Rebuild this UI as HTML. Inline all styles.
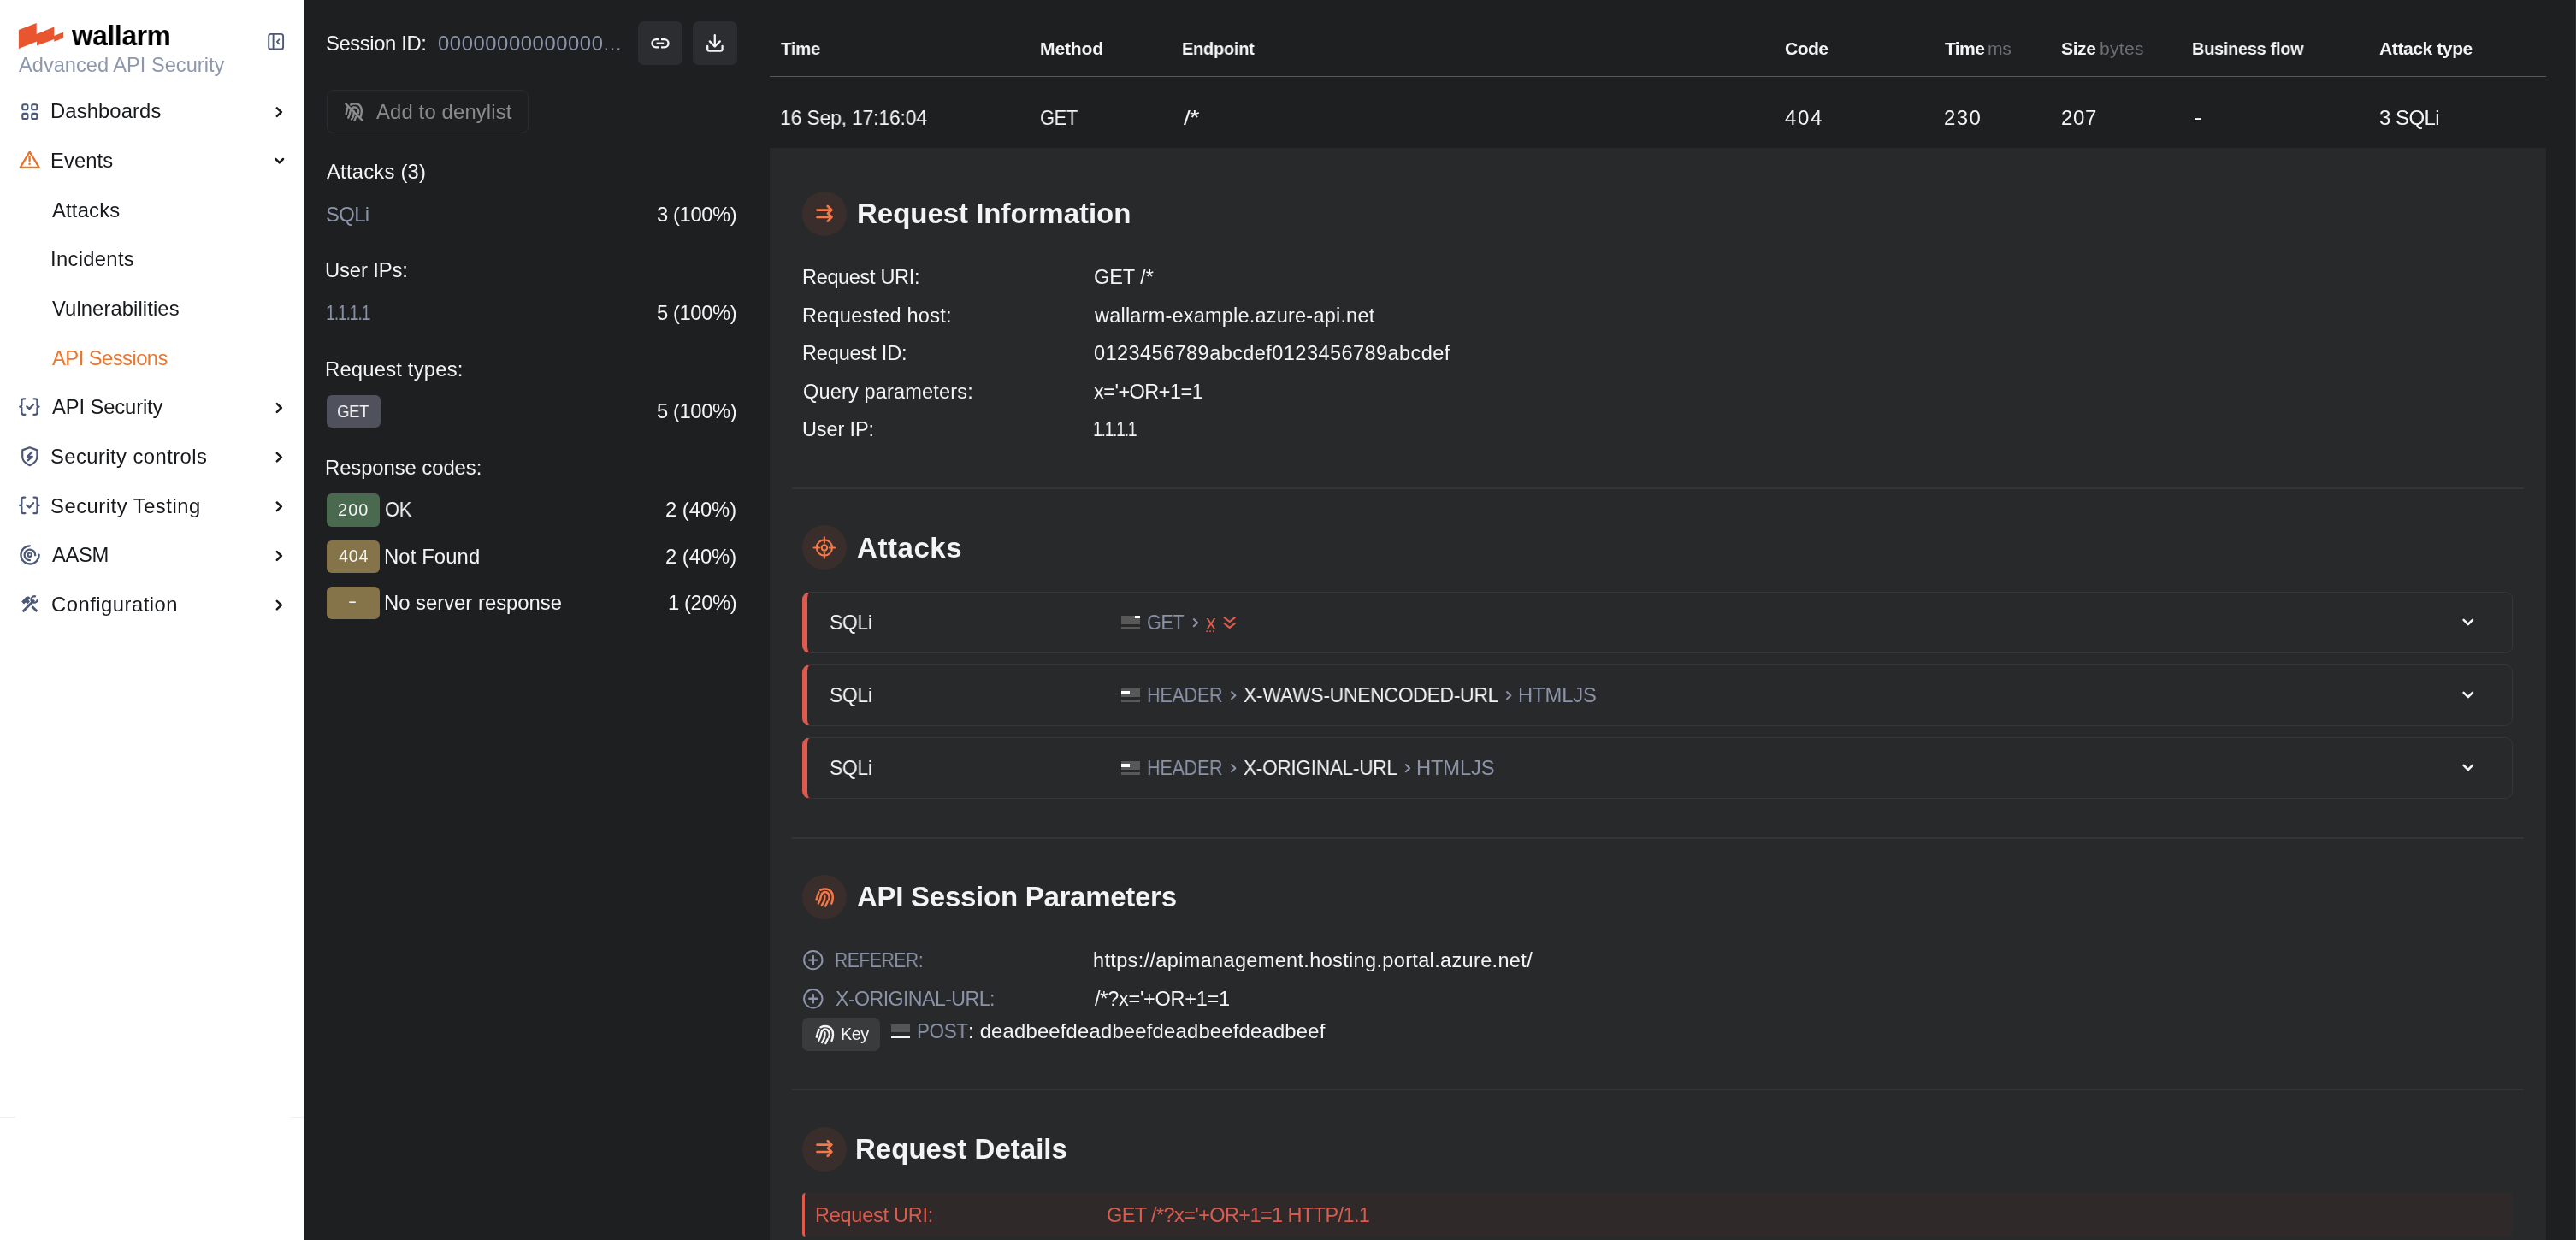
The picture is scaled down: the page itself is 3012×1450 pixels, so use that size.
<!DOCTYPE html>
<html><head><meta charset="utf-8"><style>
html,body{margin:0;padding:0}
body{width:3012px;height:1450px;position:relative;overflow:hidden;background:#1e1f21;font-family:"Liberation Sans",sans-serif}
.a{position:absolute;box-sizing:border-box}
.t{position:absolute;white-space:nowrap;will-change:transform}
</style></head><body>
<div class="a" style="left:0;top:0;width:356px;height:1450px;background:#ffffff"></div><div class="a" style="left:0;top:1305.5px;width:18px;height:1px;background:#f1f1f2"></div><div class="a" style="left:339px;top:1305.5px;width:17px;height:1px;background:#f1f1f2"></div><div class="a" style="left:900px;top:173px;width:2077px;height:1277px;background:#28292b"></div><div class="a" style="left:900px;top:89px;width:2077px;height:1.3px;background:#58595c"></div><div class="a" style="left:3011px;top:0;width:1px;height:1450px;background:#313234"></div><svg class="a" style="left:0;top:0" width="80" height="60" viewBox="0 0 80 60"><path fill="#e8552f" d="M21.9 35.1 L42.7 27 L42.7 40 L63.3 31.5 L63.3 42 L74.2 37.5 L74.2 44.4 L63.3 48.8 L63.3 46 L43.1 53.6 L43.1 48.4 L21.9 56.9 Z"/></svg><div class="a" style="left:746px;top:25px;width:52px;height:51px;border-radius:7px;background:#2c2d30"></div><div class="a" style="left:810px;top:25px;width:52px;height:51px;border-radius:7px;background:#2c2d30"></div><div class="a" style="left:382px;top:105px;width:235.5px;height:50.5px;border:1.3px solid #2b2c2f;border-radius:8px"></div><div class="a" style="left:382px;top:462px;width:63px;height:38px;border-radius:6px;background:#4f515c"></div><div class="a" style="left:382px;top:577px;width:62px;height:39px;border-radius:6px;background:#4a6a50"></div><div class="a" style="left:382px;top:631.5px;width:62px;height:38.5px;border-radius:6px;background:#857449"></div><div class="a" style="left:382px;top:685.5px;width:62px;height:38.5px;border-radius:6px;background:#857449"></div><div class="a" style="left:938px;top:224.4px;width:52px;height:52px;border-radius:50%;background:#3a2e2c"></div><div class="a" style="left:938px;top:614.4px;width:52px;height:52px;border-radius:50%;background:#3a2e2c"></div><div class="a" style="left:938px;top:1023.4px;width:52px;height:52px;border-radius:50%;background:#3a2e2c"></div><div class="a" style="left:938px;top:1317.5px;width:52px;height:52px;border-radius:50%;background:#3a2e2c"></div><div class="a" style="left:926px;top:570px;width:2025px;height:2px;background:#343537"></div><div class="a" style="left:926px;top:979px;width:2025px;height:2px;background:#343537"></div><div class="a" style="left:926px;top:1273px;width:2025px;height:2px;background:#343537"></div><div class="a" style="left:938px;top:692px;width:2000px;height:72px;border:1.2px solid #363739;border-left:6.4px solid #e0594d;border-radius:9px"></div><div class="a" style="left:938px;top:777px;width:2000px;height:72px;border:1.2px solid #363739;border-left:6.4px solid #e0594d;border-radius:9px"></div><div class="a" style="left:938px;top:862px;width:2000px;height:72px;border:1.2px solid #363739;border-left:6.4px solid #e0594d;border-radius:9px"></div><div class="a" style="left:1311px;top:720px;width:22px;height:9.8px;background:#585859"></div><div class="a" style="left:1311px;top:733px;width:22px;height:3px;background:#585859"></div><div class="a" style="left:1327px;top:720px;width:6px;height:3.2px;background:#fff"></div><div class="a" style="left:1311px;top:805px;width:22px;height:9.8px;background:#585859"></div><div class="a" style="left:1311px;top:818px;width:22px;height:3px;background:#585859"></div><div class="a" style="left:1311px;top:808.2px;width:9.8px;height:3.4px;background:#fff"></div><div class="a" style="left:1311px;top:890px;width:22px;height:9.8px;background:#585859"></div><div class="a" style="left:1311px;top:903px;width:22px;height:3px;background:#585859"></div><div class="a" style="left:1311px;top:893.2px;width:9.8px;height:3.4px;background:#fff"></div><div class="a" style="left:938px;top:1190px;width:91px;height:38.7px;border-radius:7px;background:#3a3b3d"></div><div class="a" style="left:1042px;top:1198px;width:22px;height:9.3px;background:#555657"></div><div class="a" style="left:1042px;top:1210.7px;width:22px;height:3.6px;background:#f4f4f5"></div><div class="a" style="left:938px;top:1395px;width:2000px;height:51px;background:#2f292a;border-left:3.4px solid #e0594d;border-radius:4px 0 0 4px"></div>
<svg class="a" style="left:0;top:0" width="3012" height="1450" viewBox="0 0 3012 1450"><g fill="none" stroke="#4c5878" stroke-width="2.1"><rect x="26.3" y="122.2" width="6.1" height="6.1" rx="1.6"/><rect x="37.2" y="122.2" width="6.1" height="6.1" rx="1.6"/><rect x="26.3" y="132.9" width="6.1" height="6.1" rx="1.6"/><rect x="37.2" y="132.9" width="6.1" height="6.1" rx="1.6"/></g><g fill="none" stroke="#e8722c" stroke-width="2.3" stroke-linejoin="round" stroke-linecap="round"><path d="M34.7 177.6 L45.7 195.9 L23.7 195.9 Z"/><path d="M34.6 183.2 V188.3"/></g><circle cx="34.6" cy="191.8" r="1.2" fill="#e8722c"/><g transform="translate(0 0)" fill="none" stroke="#4c5878" stroke-width="2.3" stroke-linecap="round" stroke-linejoin="round"><path d="M29.2 466.3 H27.6 Q25.3 466.3 25.3 468.6 V473.6 Q25.3 475.6 23.2 475.6 Q25.3 475.6 25.3 477.6 V482.6 Q25.3 484.8 27.6 484.8 H29.4"/><path d="M39.6 466.3 H41.2 Q43.5 466.3 43.5 468.6 V473.6 Q43.5 475.6 45.6 475.6 Q43.5 475.6 43.5 477.6 V482.6 Q43.5 484.8 41.2 484.8 H39.4"/><path d="M31.3 475.3 L34.4 478.2 L39.0 472.9"/></g><g transform="translate(0 115.3)" fill="none" stroke="#4c5878" stroke-width="2.3" stroke-linecap="round" stroke-linejoin="round"><path d="M29.2 466.3 H27.6 Q25.3 466.3 25.3 468.6 V473.6 Q25.3 475.6 23.2 475.6 Q25.3 475.6 25.3 477.6 V482.6 Q25.3 484.8 27.6 484.8 H29.4"/><path d="M39.6 466.3 H41.2 Q43.5 466.3 43.5 468.6 V473.6 Q43.5 475.6 45.6 475.6 Q43.5 475.6 43.5 477.6 V482.6 Q43.5 484.8 41.2 484.8 H39.4"/><path d="M31.3 475.3 L34.4 478.2 L39.0 472.9"/></g><g fill="none" stroke="#4c5878" stroke-width="2.2" stroke-linecap="round" stroke-linejoin="round"><path d="M34.8 523.2 L26.2 526.4 V534 Q26.2 540.5 34.8 544.2 Q43.4 540.5 43.4 534 V526.4 Z"/><path d="M37.4 528.6 L32.0 533.8 H37.8 L32.6 538.3"/></g><g fill="none" stroke="#4c5878" stroke-width="2.3" stroke-linecap="round"><path d="M34.9 638.3 A10.6 10.6 0 1 0 45.6 648.6"/><path d="M41.2 649.2 A6.3 6.3 0 1 0 34.9 655.2"/><path d="M36.4 647.2 A2.2 2.2 0 1 1 34.2 646.6"/></g><g fill="none" stroke="#4c5878" stroke-width="2.9" stroke-linecap="butt"><path d="M26.6 715.2 L40.0 701.8"/><path d="M37.6 709.2 L43.4 715.0"/></g><path fill="#4c5878" d="M25.2 703.4 L30.2 698.2 Q32.2 697.0 33.6 697.6 L35.6 699.2 L33.2 701.4 L35.0 703.4 L32.2 706.4 L30.2 704.4 L27.9 706.4 Z"/><path fill="none" stroke="#4c5878" stroke-width="2.3" d="M41.8 697.6 A3.7 3.7 0 1 0 43.9 701.2"/><path d="M323.8 126.3 L328.9 131.1 L323.8 135.9" fill="none" stroke="#17191d" stroke-width="2.5" stroke-linecap="round" stroke-linejoin="round"/><path d="M323.8 472.2 L328.9 477.0 L323.8 481.8" fill="none" stroke="#17191d" stroke-width="2.5" stroke-linecap="round" stroke-linejoin="round"/><path d="M323.8 529.9 L328.9 534.6 L323.8 539.4" fill="none" stroke="#17191d" stroke-width="2.5" stroke-linecap="round" stroke-linejoin="round"/><path d="M323.8 587.5 L328.9 592.3 L323.8 597.1" fill="none" stroke="#17191d" stroke-width="2.5" stroke-linecap="round" stroke-linejoin="round"/><path d="M323.8 645.2 L328.9 650.0 L323.8 654.8" fill="none" stroke="#17191d" stroke-width="2.5" stroke-linecap="round" stroke-linejoin="round"/><path d="M323.8 702.8 L328.9 707.6 L323.8 712.4" fill="none" stroke="#17191d" stroke-width="2.5" stroke-linecap="round" stroke-linejoin="round"/><path d="M322.4 186.0 L326.7 190.3 L331.0 186.0" fill="none" stroke="#17191d" stroke-width="2.5" stroke-linecap="round" stroke-linejoin="round"/><g fill="none" stroke="#4c5878" stroke-width="1.9" stroke-linejoin="round" stroke-linecap="round"><rect x="314.2" y="39.9" width="16.9" height="17.6" rx="2.6"/><path d="M319.6 40 V57.5"/><path d="M326.3 46.3 L323.9 48.8 L326.3 51.3"/></g><g fill="none" stroke="#f4f4f5" stroke-width="2.3"><path d="M770.6 46.2 H767 A4.55 4.55 0 0 0 767 55.3 H770.6"/><path d="M773.0 46.2 H777 A4.55 4.55 0 0 1 777 55.3 H773.0"/><path d="M767.6 50.75 H776.2"/></g><g fill="none" stroke="#f4f4f5" stroke-width="2.3" stroke-linecap="round" stroke-linejoin="round"><path d="M835.8 41.2 V54"/><path d="M829.8 48.4 L835.8 54.4 L841.8 48.4"/><path d="M827.2 54 V57.2 Q827.2 59.6 829.6 59.6 H842.2 Q844.6 59.6 844.6 57.2 V54"/></g><g fill="none" stroke="#8b8b8c" stroke-width="2.4" stroke-linecap="round"><path d="M404.2 121.3 L423.3 140.4"/><path d="M410.2 122.4 Q414.6 120.2 419.0 122.0 Q423.0 124.6 422.8 130.6 Q422.6 134.6 421.2 137.4"/><path d="M406.8 124.6 Q405.6 128.6 404.6 133.6"/><path d="M407.2 137.6 Q409.2 134.2 409.6 130.2 Q410.2 126.6 413.6 125.4 Q417.6 125.2 419.0 129.2 Q419.4 131.0 418.8 132.4"/><path d="M413.6 130.0 Q414.6 134.6 411.0 139.6"/><path d="M416.4 136.4 L414.6 140.6"/></g><g transform="translate(0 0.0)" fill="none" stroke="#f07a4c" stroke-width="2.7" stroke-linecap="round" stroke-linejoin="round"><path d="M955.5 245.6 H971"/><path d="M955.5 253.9 H971"/><path d="M967.8 241.0 L972.4 245.5 L968.0 249.6 L972.4 253.8 L967.8 258.6"/></g><g transform="translate(0 1093.1)" fill="none" stroke="#f07a4c" stroke-width="2.7" stroke-linecap="round" stroke-linejoin="round"><path d="M955.5 245.6 H971"/><path d="M955.5 253.9 H971"/><path d="M967.8 241.0 L972.4 245.5 L968.0 249.6 L972.4 253.8 L967.8 258.6"/></g><g fill="none" stroke="#f07a4c" stroke-width="2.1" stroke-linecap="round"><circle cx="963.9" cy="640.5" r="9.1"/><circle cx="963.9" cy="640.5" r="3.2"/><path d="M963.9 628.2 V634.6"/><path d="M963.9 646.4 V652.8"/><path d="M951.6 640.5 H958"/><path d="M969.8 640.5 H976.2"/></g><g fill="none" stroke="#f07a4c" stroke-width="2.5" stroke-linecap="round"><path d="M959.2 1040.8 Q964.5 1038.4 969.5 1040.6 Q974.0 1043.4 973.8 1049.6 Q973.6 1053.6 972.3 1056.6"/><path d="M957.4 1043.4 Q955.8 1047.0 954.6 1052.2"/><path d="M956.9 1056.4 Q959.4 1052.6 959.8 1048.4 Q960.6 1043.6 964.5 1043.0 Q969.0 1043.2 969.6 1048.6 Q969.8 1050.8 969.0 1052.4"/><path d="M964.2 1047.0 Q965.0 1053.0 960.8 1058.6"/><path d="M967.6 1054.4 L965.2 1059.6"/></g><g transform="translate(0.2 160.5)" fill="none" stroke="#f4f4f5" stroke-width="2.4" stroke-linecap="round"><path d="M959.2 1040.8 Q964.5 1038.4 969.5 1040.6 Q974.0 1043.4 973.8 1049.6 Q973.6 1053.6 972.3 1056.6"/><path d="M957.4 1043.4 Q955.8 1047.0 954.6 1052.2"/><path d="M956.9 1056.4 Q959.4 1052.6 959.8 1048.4 Q960.6 1043.6 964.5 1043.0 Q969.0 1043.2 969.6 1048.6 Q969.8 1050.8 969.0 1052.4"/><path d="M964.2 1047.0 Q965.0 1053.0 960.8 1058.6"/><path d="M967.6 1054.4 L965.2 1059.6"/></g><path d="M2880.6 724.8 L2885.8 730.0 L2891.0 724.8" fill="none" stroke="#f4f4f5" stroke-width="2.6" stroke-linecap="round" stroke-linejoin="round"/><path d="M2880.6 809.8 L2885.8 815.0 L2891.0 809.8" fill="none" stroke="#f4f4f5" stroke-width="2.6" stroke-linecap="round" stroke-linejoin="round"/><path d="M2880.6 894.8 L2885.8 900.0 L2891.0 894.8" fill="none" stroke="#f4f4f5" stroke-width="2.6" stroke-linecap="round" stroke-linejoin="round"/><path d="M1395.8 724.1 L1400.2 728.2 L1395.8 732.3" fill="none" stroke="#8b93a8" stroke-width="2.0" stroke-linecap="round" stroke-linejoin="round"/><path d="M1440.0 809.1 L1444.4 813.2 L1440.0 817.3" fill="none" stroke="#8b93a8" stroke-width="2.0" stroke-linecap="round" stroke-linejoin="round"/><path d="M1762.0 809.1 L1766.4 813.2 L1762.0 817.3" fill="none" stroke="#8b93a8" stroke-width="2.0" stroke-linecap="round" stroke-linejoin="round"/><path d="M1440.0 894.1 L1444.4 898.2 L1440.0 902.3" fill="none" stroke="#8b93a8" stroke-width="2.0" stroke-linecap="round" stroke-linejoin="round"/><path d="M1643.8 894.1 L1648.2 898.2 L1643.8 902.3" fill="none" stroke="#8b93a8" stroke-width="2.0" stroke-linecap="round" stroke-linejoin="round"/><g fill="none" stroke="#e25b4f" stroke-width="2.2" stroke-linecap="round" stroke-linejoin="round"><path d="M1431.5 722.2 L1437.7 727.0 L1443.9 722.2"/><path d="M1431.5 729.0 L1437.7 733.8 L1443.9 729.0"/></g><rect x="1410.4" y="737.4" width="1.6" height="1.6" fill="#e25b4f"/><rect x="1414.2" y="737.4" width="1.6" height="1.6" fill="#e25b4f"/><rect x="1418.0" y="737.4" width="1.6" height="1.6" fill="#e25b4f"/><g fill="none" stroke="#8b93a8" stroke-linecap="round"><circle cx="950.8" cy="1122.6" r="10.7" stroke-width="2.0"/><path stroke-width="2.4" d="M950.8 1118.0 V1127.2"/><path stroke-width="2.4" d="M946.2 1122.6 H955.4"/></g><g fill="none" stroke="#8b93a8" stroke-linecap="round"><circle cx="950.8" cy="1167.8" r="10.7" stroke-width="2.0"/><path stroke-width="2.4" d="M950.8 1163.2 V1172.4"/><path stroke-width="2.4" d="M946.2 1167.8 H955.4"/></g></svg>
<div class="t" style="left:84.2px;top:24.7px;font-size:33.8px;line-height:33.8px;font-weight:700;letter-spacing:-0.300px;transform:scaleX(0.9324);transform-origin:0 0;color:#000000">wallarm</div><div class="t" style="left:21.7px;top:65.0px;font-size:23.6px;line-height:23.6px;font-weight:400;letter-spacing:0.016px;color:#8e98ad">Advanced API Security</div><div class="t" style="left:59.2px;top:118.3px;font-size:23.8px;line-height:23.8px;font-weight:400;letter-spacing:0.116px;color:#17191d">Dashboards</div><div class="t" style="left:59.2px;top:176.0px;font-size:23.8px;line-height:23.8px;font-weight:400;letter-spacing:0.069px;color:#17191d">Events</div><div class="t" style="left:60.5px;top:233.6px;font-size:23.8px;line-height:23.8px;font-weight:400;letter-spacing:0.195px;color:#17191d">Attacks</div><div class="t" style="left:58.6px;top:291.2px;font-size:23.8px;line-height:23.8px;font-weight:400;letter-spacing:0.312px;color:#17191d">Incidents</div><div class="t" style="left:60.5px;top:348.9px;font-size:23.8px;line-height:23.8px;font-weight:400;letter-spacing:0.092px;color:#17191d">Vulnerabilities</div><div class="t" style="left:60.5px;top:406.6px;font-size:23.8px;line-height:23.8px;font-weight:400;letter-spacing:-0.557px;color:#e9772e">API Sessions</div><div class="t" style="left:60.5px;top:464.2px;font-size:23.8px;line-height:23.8px;font-weight:400;letter-spacing:-0.130px;color:#17191d">API Security</div><div class="t" style="left:59.4px;top:521.9px;font-size:23.8px;line-height:23.8px;font-weight:400;letter-spacing:0.433px;color:#17191d">Security controls</div><div class="t" style="left:59.4px;top:579.5px;font-size:23.8px;line-height:23.8px;font-weight:400;letter-spacing:0.509px;color:#17191d">Security Testing</div><div class="t" style="left:60.5px;top:637.2px;font-size:23.8px;line-height:23.8px;font-weight:400;letter-spacing:-0.353px;color:#17191d">AASM</div><div class="t" style="left:59.5px;top:694.8px;font-size:23.8px;line-height:23.8px;font-weight:400;letter-spacing:0.497px;color:#17191d">Configuration</div><div class="t" style="left:381.3px;top:39.0px;font-size:23.8px;line-height:23.8px;font-weight:400;letter-spacing:-0.384px;color:#f4f4f5">Session ID:</div><div class="t" style="left:511.9px;top:38.8px;font-size:23.8px;line-height:23.8px;font-weight:400;letter-spacing:0.587px;color:#8b93a8">00000000000000...</div><div class="t" style="left:439.8px;top:119.1px;font-size:23.8px;line-height:23.8px;font-weight:400;letter-spacing:0.167px;color:#8b8b8c">Add to denylist</div><div class="t" style="left:381.9px;top:189.2px;font-size:23.8px;line-height:23.8px;font-weight:400;letter-spacing:0.220px;color:#f4f4f5">Attacks (3)</div><div class="t" style="left:380.8px;top:238.9px;font-size:23.8px;line-height:23.8px;font-weight:400;letter-spacing:-0.592px;color:#8b93a8">SQLi</div><div class="t" style="left:767.8px;top:238.9px;font-size:23.8px;line-height:23.8px;font-weight:400;letter-spacing:-0.404px;color:#f4f4f5">3 (100%)</div><div class="t" style="left:380.4px;top:303.8px;font-size:23.8px;line-height:23.8px;font-weight:400;letter-spacing:-0.133px;color:#f4f4f5">User IPs:</div><div class="t" style="left:380.6px;top:353.8px;font-size:23.8px;line-height:23.8px;font-weight:400;letter-spacing:-1.600px;transform:scaleX(0.8300);transform-origin:0 0;color:#8b93a8">1.1.1.1</div><div class="t" style="left:767.9px;top:353.8px;font-size:23.8px;line-height:23.8px;font-weight:400;letter-spacing:-0.414px;color:#f4f4f5">5 (100%)</div><div class="t" style="left:380.2px;top:420.4px;font-size:23.8px;line-height:23.8px;font-weight:400;letter-spacing:0.201px;color:#f4f4f5">Request types:</div><div class="t" style="left:394.2px;top:471.0px;font-size:20.4px;line-height:20.4px;font-weight:400;letter-spacing:-0.300px;transform:scaleX(0.9095);transform-origin:0 0;color:#f4f4f5">GET</div><div class="t" style="left:767.9px;top:468.8px;font-size:23.8px;line-height:23.8px;font-weight:400;letter-spacing:-0.414px;color:#f4f4f5">5 (100%)</div><div class="t" style="left:380.3px;top:535.2px;font-size:23.8px;line-height:23.8px;font-weight:400;letter-spacing:-0.045px;color:#f4f4f5">Response codes:</div><div class="t" style="left:395.2px;top:587.1px;font-size:19.8px;line-height:19.8px;font-weight:400;letter-spacing:1.161px;color:#f4f4f5">200</div><div class="t" style="left:450.2px;top:584.2px;font-size:23.8px;line-height:23.8px;font-weight:400;letter-spacing:-0.300px;transform:scaleX(0.9185);transform-origin:0 0;color:#f4f4f5">OK</div><div class="t" style="left:778.3px;top:584.2px;font-size:23.8px;line-height:23.8px;font-weight:400;letter-spacing:-0.032px;color:#f4f4f5">2 (40%)</div><div class="t" style="left:395.7px;top:641.4px;font-size:19.8px;line-height:19.8px;font-weight:400;letter-spacing:0.720px;color:#f4f4f5">404</div><div class="t" style="left:449.4px;top:639.2px;font-size:23.8px;line-height:23.8px;font-weight:400;letter-spacing:0.132px;color:#f4f4f5">Not Found</div><div class="t" style="left:778.3px;top:639.2px;font-size:23.8px;line-height:23.8px;font-weight:400;letter-spacing:-0.032px;color:#f4f4f5">2 (40%)</div><div class="t" style="left:407.0px;top:693.6px;font-size:19.8px;line-height:19.8px;font-weight:400;letter-spacing:-0.300px;transform:scaleX(1.5420);transform-origin:0 0;color:#f4f4f5">-</div><div class="t" style="left:449.4px;top:692.5px;font-size:23.8px;line-height:23.8px;font-weight:400;letter-spacing:0.018px;color:#f4f4f5">No server response</div><div class="t" style="left:780.8px;top:692.5px;font-size:23.8px;line-height:23.8px;font-weight:400;letter-spacing:-0.437px;color:#f4f4f5">1 (20%)</div><div class="t" style="left:913.3px;top:46.4px;font-size:21.1px;line-height:21.1px;font-weight:700;letter-spacing:-0.300px;transform:scaleX(0.9662);transform-origin:0 0;color:#f4f4f5">Time</div><div class="t" style="left:1216.0px;top:46.4px;font-size:21.1px;line-height:21.1px;font-weight:700;letter-spacing:-0.173px;color:#f4f4f5">Method</div><div class="t" style="left:1382.4px;top:46.4px;font-size:21.1px;line-height:21.1px;font-weight:700;letter-spacing:-0.300px;transform:scaleX(0.9499);transform-origin:0 0;color:#f4f4f5">Endpoint</div><div class="t" style="left:2086.9px;top:46.4px;font-size:21.1px;line-height:21.1px;font-weight:700;letter-spacing:-0.586px;color:#f4f4f5">Code</div><div class="t" style="left:2273.5px;top:46.4px;font-size:21.1px;line-height:21.1px;font-weight:700;letter-spacing:-0.656px;color:#f4f4f5">Time</div><div class="t" style="left:2410.2px;top:46.4px;font-size:21.1px;line-height:21.1px;font-weight:700;letter-spacing:-0.441px;color:#f4f4f5">Size</div><div class="t" style="left:2563.4px;top:46.4px;font-size:21.1px;line-height:21.1px;font-weight:700;letter-spacing:-0.300px;transform:scaleX(0.9453);transform-origin:0 0;color:#f4f4f5">Business flow</div><div class="t" style="left:2782.1px;top:46.4px;font-size:21.1px;line-height:21.1px;font-weight:700;letter-spacing:-0.439px;color:#f4f4f5">Attack type</div><div class="t" style="left:2323.7px;top:46.4px;font-size:21.1px;line-height:21.1px;font-weight:400;letter-spacing:-0.331px;color:#6d6e71">ms</div><div class="t" style="left:2454.6px;top:46.4px;font-size:21.1px;line-height:21.1px;font-weight:400;letter-spacing:0.258px;color:#6d6e71">bytes</div><div class="t" style="left:911.8px;top:126.3px;font-size:24.0px;line-height:24.0px;font-weight:400;letter-spacing:-0.300px;transform:scaleX(0.9651);transform-origin:0 0;color:#f4f4f5">16 Sep, 17:16:04</div><div class="t" style="left:1216.2px;top:126.3px;font-size:24.0px;line-height:24.0px;font-weight:400;letter-spacing:-0.300px;transform:scaleX(0.9109);transform-origin:0 0;color:#f4f4f5">GET</div><div class="t" style="left:1383.6px;top:126.3px;font-size:24.0px;line-height:24.0px;font-weight:400;letter-spacing:-0.300px;transform:scaleX(1.1650);transform-origin:0 0;color:#f4f4f5">/</div><div class="t" style="left:1391.1px;top:126.3px;font-size:24.0px;line-height:24.0px;font-weight:400;letter-spacing:-0.300px;transform:scaleX(1.2467);transform-origin:0 0;color:#f4f4f5">*</div><div class="t" style="left:2087.2px;top:126.3px;font-size:24.0px;line-height:24.0px;font-weight:400;letter-spacing:1.619px;color:#f4f4f5">404</div><div class="t" style="left:2272.6px;top:126.3px;font-size:24.0px;line-height:24.0px;font-weight:400;letter-spacing:1.390px;color:#f4f4f5">230</div><div class="t" style="left:2409.8px;top:126.3px;font-size:24.0px;line-height:24.0px;font-weight:400;letter-spacing:0.680px;color:#f4f4f5">207</div><div class="t" style="left:2564.7px;top:125.3px;font-size:24.0px;line-height:24.0px;font-weight:400;letter-spacing:-0.300px;transform:scaleX(1.2345);transform-origin:0 0;color:#f4f4f5">-</div><div class="t" style="left:2781.6px;top:126.3px;font-size:24.0px;line-height:24.0px;font-weight:400;letter-spacing:-0.547px;color:#f4f4f5">3 SQLi</div><div class="t" style="left:1001.7px;top:232.8px;font-size:33.0px;line-height:33.0px;font-weight:700;letter-spacing:-0.026px;color:#f4f4f5">Request Information</div><div class="t" style="left:938.1px;top:313.2px;font-size:23.5px;line-height:23.5px;font-weight:400;letter-spacing:-0.332px;color:#f4f4f5">Request URI:</div><div class="t" style="left:1278.8px;top:313.2px;font-size:23.5px;line-height:23.5px;font-weight:400;letter-spacing:-0.047px;color:#f4f4f5">GET /*</div><div class="t" style="left:938.1px;top:357.8px;font-size:23.5px;line-height:23.5px;font-weight:400;letter-spacing:0.237px;color:#f4f4f5">Requested host:</div><div class="t" style="left:1279.9px;top:357.8px;font-size:23.5px;line-height:23.5px;font-weight:400;letter-spacing:0.211px;color:#f4f4f5">wallarm-example.azure-api.net</div><div class="t" style="left:938.1px;top:402.3px;font-size:23.5px;line-height:23.5px;font-weight:400;letter-spacing:-0.150px;color:#f4f4f5">Request ID:</div><div class="t" style="left:1279.1px;top:402.3px;font-size:23.5px;line-height:23.5px;font-weight:400;letter-spacing:0.443px;color:#f4f4f5">0123456789abcdef0123456789abcdef</div><div class="t" style="left:938.8px;top:446.8px;font-size:23.5px;line-height:23.5px;font-weight:400;letter-spacing:0.172px;color:#f4f4f5">Query parameters:</div><div class="t" style="left:1279.4px;top:446.8px;font-size:23.5px;line-height:23.5px;font-weight:400;letter-spacing:-0.519px;color:#f4f4f5">x=&#x27;+OR+1=1</div><div class="t" style="left:938.2px;top:491.4px;font-size:23.5px;line-height:23.5px;font-weight:400;letter-spacing:-0.132px;color:#f4f4f5">User IP:</div><div class="t" style="left:1278.4px;top:491.4px;font-size:23.5px;line-height:23.5px;font-weight:400;letter-spacing:-1.600px;transform:scaleX(0.8284);transform-origin:0 0;color:#f4f4f5">1.1.1.1</div><div class="t" style="left:1002.0px;top:624.0px;font-size:33.0px;line-height:33.0px;font-weight:700;letter-spacing:0.571px;color:#f4f4f5">Attacks</div><div class="t" style="left:969.8px;top:716.0px;font-size:23.8px;line-height:23.8px;font-weight:400;letter-spacing:-0.300px;transform:scaleX(0.9606);transform-origin:0 0;color:#f4f4f5">SQLi</div><div class="t" style="left:969.8px;top:801.0px;font-size:23.8px;line-height:23.8px;font-weight:400;letter-spacing:-0.300px;transform:scaleX(0.9606);transform-origin:0 0;color:#f4f4f5">SQLi</div><div class="t" style="left:969.8px;top:886.0px;font-size:23.8px;line-height:23.8px;font-weight:400;letter-spacing:-0.300px;transform:scaleX(0.9606);transform-origin:0 0;color:#f4f4f5">SQLi</div><div class="t" style="left:1341.2px;top:716.0px;font-size:23.8px;line-height:23.8px;font-weight:400;letter-spacing:-0.300px;transform:scaleX(0.9047);transform-origin:0 0;color:#8b93a8">GET</div><div class="t" style="left:1409.6px;top:716.0px;font-size:23.8px;line-height:23.8px;font-weight:400;letter-spacing:-0.300px;transform:scaleX(0.9724);transform-origin:0 0;color:#e25b4f">x</div><div class="t" style="left:1341.1px;top:801.0px;font-size:23.8px;line-height:23.8px;font-weight:400;letter-spacing:-0.300px;transform:scaleX(0.9069);transform-origin:0 0;color:#8b93a8">HEADER</div><div class="t" style="left:1453.5px;top:801.0px;font-size:23.8px;line-height:23.8px;font-weight:400;letter-spacing:-0.300px;transform:scaleX(0.9633);transform-origin:0 0;color:#f4f4f5">X-WAWS-UNENCODED-URL</div><div class="t" style="left:1774.5px;top:801.0px;font-size:23.8px;line-height:23.8px;font-weight:400;letter-spacing:-0.120px;color:#8b93a8">HTMLJS</div><div class="t" style="left:1341.1px;top:886.0px;font-size:23.8px;line-height:23.8px;font-weight:400;letter-spacing:-0.300px;transform:scaleX(0.9069);transform-origin:0 0;color:#8b93a8">HEADER</div><div class="t" style="left:1453.5px;top:886.0px;font-size:23.8px;line-height:23.8px;font-weight:400;letter-spacing:-0.300px;transform:scaleX(0.9508);transform-origin:0 0;color:#f4f4f5">X-ORIGINAL-URL</div><div class="t" style="left:1656.3px;top:886.0px;font-size:23.8px;line-height:23.8px;font-weight:400;letter-spacing:-0.197px;color:#8b93a8">HTMLJS</div><div class="t" style="left:1002.3px;top:1031.9px;font-size:33.0px;line-height:33.0px;font-weight:700;letter-spacing:-0.270px;color:#f4f4f5">API Session Parameters</div><div class="t" style="left:976.2px;top:1112.0px;font-size:23.2px;line-height:23.2px;font-weight:400;letter-spacing:-0.300px;transform:scaleX(0.8996);transform-origin:0 0;color:#8b93a8">REFERER:</div><div class="t" style="left:1278.3px;top:1112.0px;font-size:23.5px;line-height:23.5px;font-weight:400;letter-spacing:0.347px;color:#f4f4f5">https://apimanagement.hosting.portal.azure.net/</div><div class="t" style="left:976.6px;top:1157.2px;font-size:23.2px;line-height:23.2px;font-weight:400;letter-spacing:-0.580px;color:#8b93a8">X-ORIGINAL-URL:</div><div class="t" style="left:1279.8px;top:1157.2px;font-size:23.5px;line-height:23.5px;font-weight:400;letter-spacing:-0.266px;color:#f4f4f5">/*?x=&#x27;+OR+1=1</div><div class="t" style="left:982.8px;top:1199.7px;font-size:19.8px;line-height:19.8px;font-weight:400;letter-spacing:-0.435px;color:#f4f4f5">Key</div><div class="t" style="left:1071.5px;top:1194.0px;font-size:23.8px;line-height:23.8px;font-weight:400;letter-spacing:-0.300px;transform:scaleX(0.9414);transform-origin:0 0;color:#8b93a8">POST</div><div class="t" style="left:1131.6px;top:1194.0px;font-size:23.8px;line-height:23.8px;font-weight:400;letter-spacing:0.214px;color:#f4f4f5">: deadbeefdeadbeefdeadbeefdeadbeef</div><div class="t" style="left:1000.3px;top:1326.6px;font-size:33.0px;line-height:33.0px;font-weight:700;letter-spacing:0.021px;color:#f4f4f5">Request Details</div><div class="t" style="left:952.7px;top:1410.0px;font-size:23.5px;line-height:23.5px;font-weight:400;letter-spacing:-0.261px;color:#d95c4e">Request URI:</div><div class="t" style="left:1294.1px;top:1410.0px;font-size:23.5px;line-height:23.5px;font-weight:400;letter-spacing:-0.595px;color:#d95c4e">GET /*?x=&#x27;+OR+1=1 HTTP/1.1</div>
</body></html>
